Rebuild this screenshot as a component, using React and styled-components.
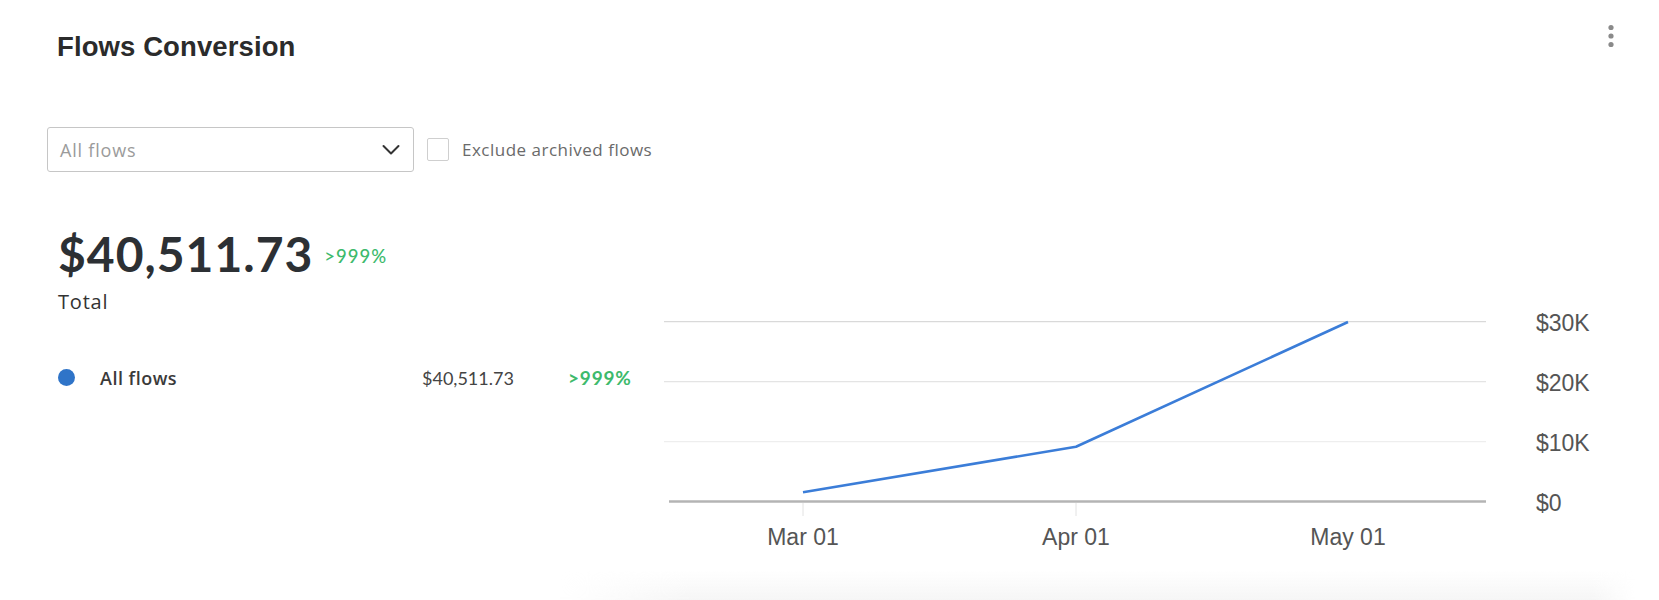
import React from "react";
import styled, { createGlobalStyle } from "styled-components";

const Global = createGlobalStyle`
  html, body { margin: 0; padding: 0; background: #ffffff; }
  body { font-family: "Open Sans", "Lato", "Liberation Sans", sans-serif; color: #333; }
`;

const Page = styled.div`
  width: 1659px;
  height: 600px;
  overflow: hidden;
  background: #fff;
  display: flex;
  flex-direction: column;
`;

const Header = styled.header`
  display: flex;
  justify-content: space-between;
  align-items: flex-start;
  padding: 23px 43px 0 57px;
`;

const Title = styled.h1`
  margin: 8px 0 0;
  font-family: "Liberation Sans", Arial, sans-serif;
  font-size: 27.5px;
  line-height: 32px;
  font-weight: 700;
  color: #2b2b2b;
  letter-spacing: 0.1px;
`;

const MenuButton = styled.button`
  border: 0;
  padding: 0;
  background: transparent;
  width: 10px;
  height: 26px;
  display: flex;
  cursor: pointer;
`;

const Controls = styled.div`
  display: flex;
  align-items: center;
  margin-top: 64px;
  padding-left: 47px;
`;

const Select = styled.div`
  box-sizing: border-box;
  width: 367px;
  height: 45px;
  border: 1px solid #c6c6c6;
  border-radius: 3px;
  display: flex;
  align-items: center;
  justify-content: space-between;
  padding: 0 13px 0 12px;
  font-size: 18px;
  letter-spacing: 0.8px;
  color: #9b9b9b;
`;

const CheckRow = styled.label`
  display: flex;
  align-items: center;
  margin-left: 13px;
  gap: 13px;
  font-size: 17px;
  letter-spacing: 0.5px;
  color: #6a6a6a;
`;

const Box = styled.span`
  box-sizing: border-box;
  width: 22px;
  height: 23px;
  border: 1px solid #cfcfcf;
  border-radius: 2px;
  background: #fff;
`;

const Body = styled.div`
  display: flex;
  margin-top: 53px;
  padding-left: 58px;
`;

const LeftCol = styled.div`
  width: 582px;
  display: flex;
  flex-direction: column;
`;

const SummaryRow = styled.div`
  display: flex;
  align-items: center;
  gap: 11px;
`;

const Amount = styled.div`
  font-family: "Lato", "Liberation Sans", sans-serif;
  font-size: 48px;
  line-height: 1.2;
  font-weight: 700;
  color: #2c3034;
  letter-spacing: 1px;
`;

const Change = styled.span`
  font-family: "Lato", "Liberation Sans", sans-serif;
  color: #3dba6c;
  font-size: ${(p) => p.$size || 16}px;
  font-weight: ${(p) => p.$weight || 500};
  letter-spacing: ${(p) => p.$spacing || 0}px;
  line-height: 1.2;
  margin-top: ${(p) => p.$offset || 0}px;
`;

const TotalLabel = styled.div`
  margin-top: 7px;
  font-size: 20px;
  line-height: 24px;
  color: #333;
  font-weight: 500;
  letter-spacing: 0.8px;
`;

const LegendRow = styled.div`
  margin-top: 53px;
  display: grid;
  grid-template-columns: 42px 322px 146px auto;
  align-items: center;
  line-height: 22px;
`;

const Dot = styled.span`
  width: 17px;
  height: 17px;
  border-radius: 50%;
  background: ${(p) => p.$color};
`;

const LegendName = styled.span`
  font-size: 18px;
  font-weight: 600;
  letter-spacing: 0.5px;
  color: #3a3a3a;
`;

const LegendValue = styled.span`
  font-family: "Lato", "Liberation Sans", sans-serif;
  font-size: 18px;
  color: #444;
`;

const ChartWrap = styled.div`
  margin-top: 75px;
  width: 960px;
  height: 270px;
`;

const Fade = styled.div`
  margin-left: 560px;
  width: 1075px;
  height: 30px;
  background: linear-gradient(to bottom, rgba(255, 255, 255, 0) 0%, rgba(238, 238, 238, 0.55) 100%);
  -webkit-mask-image: linear-gradient(to right, transparent 0%, #000 12%, #000 96%, transparent 100%);
  mask-image: linear-gradient(to right, transparent 0%, #000 12%, #000 96%, transparent 100%);
`;

const ChevronDown = () => (
  <svg width="18" height="12" viewBox="0 0 18 12" fill="none">
    <path d="M1.5 2 L9 9.5 L16.5 2" stroke="#333" strokeWidth="2" strokeLinecap="round" strokeLinejoin="round" />
  </svg>
);

const Kebab = () => (
  <svg width="10" height="26" viewBox="0 0 10 26">
    <circle cx="5" cy="4.5" r="2.6" fill="#8a8a8a" />
    <circle cx="5" cy="13" r="2.6" fill="#8a8a8a" />
    <circle cx="5" cy="21.5" r="2.6" fill="#8a8a8a" />
  </svg>
);

const grid = [
  { y: 21.7, label: "$30K", color: "#d9d9d9" },
  { y: 81.6, label: "$20K", color: "#e4e4e4" },
  { y: 141.6, label: "$10K", color: "#eeeeee" },
];

const points = [
  { x: 163, y: 192.3, label: "Mar 01", tick: true },
  { x: 436, y: 146.7, label: "Apr 01", tick: true },
  { x: 708, y: 22, label: "May 01", tick: false },
];

const Chart = () => (
  <svg width="960" height="270" viewBox="0 0 960 270">
    {grid.map((g) => (
      <g key={g.label}>
        <line x1="24" x2="846" y1={g.y} y2={g.y} stroke={g.color} strokeWidth="1.2" />
        <text x="896" y={g.y + 9} fontFamily="Liberation Sans, Arial, sans-serif" fontSize="23" fill="#555">
          {g.label}
        </text>
      </g>
    ))}
    {points.filter((p) => p.tick).map((p) => (
      <line key={p.label + "t"} x1={p.x} x2={p.x} y1="203" y2="216" stroke="#e2e2e2" strokeWidth="1" />
    ))}
    <line x1="29" x2="846" y1="201.5" y2="201.5" stroke="#b4b4b4" strokeWidth="2.6" />
    <text x="896" y="210.5" fontFamily="Liberation Sans, Arial, sans-serif" fontSize="23" fill="#555">
      $0
    </text>
    <polyline
      points={points.map((p) => `${p.x},${p.y}`).join(" ")}
      fill="none"
      stroke="#3b7dd8"
      strokeWidth="2.6"
      strokeLinejoin="round"
    />
    {points.map((p) => (
      <text
        key={p.label}
        x={p.x}
        y="245"
        textAnchor="middle"
        fontFamily="Liberation Sans, Arial, sans-serif"
        fontSize="23"
        fill="#555"
      >
        {p.label}
      </text>
    ))}
  </svg>
);

export default function App() {
  return (
    <>
      <Global />
      <Page>
        <Header>
          <Title>Flows Conversion</Title>
          <MenuButton aria-label="More options">
            <Kebab />
          </MenuButton>
        </Header>
        <Controls>
          <Select>
            <span>All flows</span>
            <ChevronDown />
          </Select>
          <CheckRow>
            <Box />
            <span>Exclude archived flows</span>
          </CheckRow>
        </Controls>
        <Body>
          <LeftCol>
            <SummaryRow>
              <Amount>$40,511.73</Amount>
              <Change $size={18.5} $spacing={1} $offset={4}>&gt;999%</Change>
            </SummaryRow>
            <TotalLabel>Total</TotalLabel>
            <LegendRow>
              <Dot $color="#2f74c8" />
              <LegendName>All flows</LegendName>
              <LegendValue>$40,511.73</LegendValue>
              <Change $size={19} $weight={700} $spacing={0.8}>&gt;999%</Change>
            </LegendRow>
          </LeftCol>
          <ChartWrap>
            <Chart />
          </ChartWrap>
        </Body>
        <Fade />
      </Page>
    </>
  );
}
